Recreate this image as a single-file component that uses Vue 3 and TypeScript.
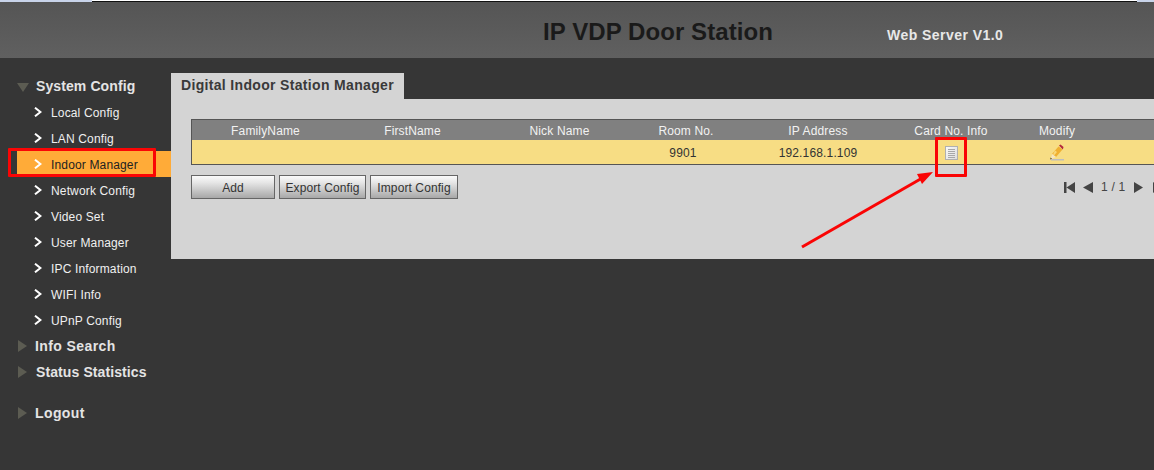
<script setup lang="ts">
const menu = [
  'Local Config',
  'LAN Config',
  'Indoor Manager',
  'Network Config',
  'Video Set',
  'User Manager',
  'IPC Information',
  'WIFI Info',
  'UPnP Config'
]

const columns = [
  { label: 'FamilyName', width: 147 },
  { label: 'FirstName', width: 147 },
  { label: 'Nick Name', width: 147 },
  { label: 'Room No.', width: 106 },
  { label: 'IP Address', width: 158 },
  { label: 'Card No. Info', width: 108 },
  { label: 'Modify', width: 104 }
]
</script>

<template>
  <div class="page">
    <div class="top-strip">
      <div class="strip-left"></div>
      <div class="strip-mid"></div>
      <div class="strip-right"></div>
    </div>

    <header class="header">
      <h1 class="title">IP VDP Door Station</h1>
      <span class="version">Web Server V1.0</span>
    </header>

    <div class="main">
      <aside class="sidebar">
        <div class="group inset">
          <span class="tri down"></span>
          <span>System Config</span>
        </div>
        <ul class="menu">
          <li v-for="item in menu" :key="item" :class="{ active: item === 'Indoor Manager' }">
            <svg class="chev" width="8" height="10" viewBox="0 0 8 10">
              <path d="M1 0.7 L6.4 5 L1 9.3" fill="none" stroke="currentColor" stroke-width="2" />
            </svg>
            <span class="label">{{ item }}</span>
          </li>
        </ul>
        <div class="group wide">
          <span class="tri right"></span>
          <span>Info Search</span>
        </div>
        <div class="group inset">
          <span class="tri right"></span>
          <span>Status Statistics</span>
        </div>
        <div class="group wide logout">
          <span class="tri right"></span>
          <span>Logout</span>
        </div>
      </aside>

      <section class="content">
        <div class="tab">Digital Indoor Station Manager</div>
        <div class="panel">
          <div class="table">
            <div class="row head">
              <div v-for="c in columns" :key="c.label" class="cell" :style="{ width: c.width + 'px' }">{{ c.label }}</div>
            </div>
            <div class="row body">
              <div class="cell spacer"></div>
              <div class="cell room">9901</div>
              <div class="cell ip">192.168.1.109</div>
              <div class="cell card">
                <svg width="13" height="14" viewBox="0 0 13 14">
                  <defs>
                    <linearGradient id="sheet" x1="0" y1="0" x2="1" y2="1">
                      <stop offset="0" stop-color="#fafafa" />
                      <stop offset="1" stop-color="#dcdcdc" />
                    </linearGradient>
                  </defs>
                  <rect x="0.5" y="0.5" width="12" height="13" fill="url(#sheet)" stroke="#b0b0b0" />
                  <path d="M3 3.5H10M3 5.5H10M3 7.5H10M3 9.5H10M3 11.5H10" stroke="#a8a8a8" stroke-width="1" />
                </svg>
              </div>
              <div class="cell modify">
                <svg width="14" height="17" viewBox="0 0 14 17">
                  <path d="M8.5 2.5 L12.5 5.5 L6 13 L2 10 Z" fill="#f0b030" />
                  <path d="M5 6.5 L7 8 L4 11.5 L3 10.5 Z" fill="#f8d878" />
                  <path d="M9 1.5 L10.5 0.5 L13.5 3 L12.8 5.5 Z" fill="#b3283c" />
                  <path d="M2 10 L6 13 L1 15 Z" fill="#f4e6c4" />
                  <path d="M0.5 13.5 L2 15 L0.5 15.5 Z" fill="#222" />
                  <rect x="1" y="15" width="13" height="1.5" fill="#bdbdbd" />
                </svg>
              </div>
            </div>
          </div>

          <div class="toolbar">
            <button class="btn add">Add</button>
            <button class="btn export">Export Config</button>
            <button class="btn import">Import Config</button>
            <div class="pager">
              <svg width="11" height="11" viewBox="0 0 11 11"><path d="M0 0H2.5V11H0Z M11 0V11L2.5 5.5Z" fill="#444" /></svg>
              <svg class="prev" width="10" height="11" viewBox="0 0 10 11"><path d="M10 0V11L0 5.5Z" fill="#444" /></svg>
              <span class="num">1 / 1</span>
              <svg class="next" width="9" height="11" viewBox="0 0 9 11"><path d="M0 0V11L9 5.5Z" fill="#444" /></svg>
              <svg class="last" width="11" height="11" viewBox="0 0 11 11"><path d="M11 0H8.5V11H11Z M0 0V11L8.5 5.5Z" fill="#444" /></svg>
            </div>
          </div>
        </div>
      </section>
    </div>

    <!-- annotations drawn on the screenshot -->
    <div class="mark mark-menu"></div>
    <div class="mark mark-card"></div>
    <svg class="arrow" width="150" height="95" viewBox="0 0 150 95">
      <path d="M12 87 L134 17" stroke="#fa0505" stroke-width="3" fill="none" />
      <path d="M143 12 L127 14 L132 24 Z" fill="#fa0505" />
    </svg>
  </div>
</template>

<style>
html,
body {
  margin: 0;
  background: #363636;
}
</style>

<style scoped>
.page {
  position: relative;
  width: 1154px;
  height: 470px;
  overflow: hidden;
  background: #363636;
  font-family: "Liberation Sans", Arial, sans-serif;
}

.top-strip {
  display: flex;
  height: 2px;
}
.strip-left,
.strip-right {
  background: #c9d4ea;
}
.strip-left {
  width: 92px;
}
.strip-right {
  width: 17px;
}
.strip-mid {
  flex: 1;
  background: #fff;
  border-bottom: 1px solid #111;
  box-sizing: border-box;
}

.header {
  display: flex;
  align-items: flex-start;
  height: 56px;
  background: linear-gradient(#555, #606060);
}
.title {
  margin: 16px 0 0 543px;
  font-size: 24px;
  line-height: 28px;
  font-weight: bold;
  letter-spacing: 0.08px;
  color: #1a1a1a;
}
.version {
  margin: 25px 0 0 114px;
  font-size: 14px;
  line-height: 16px;
  font-weight: bold;
  letter-spacing: 0.45px;
  color: #e8e8e8;
}

.main {
  display: flex;
}
.sidebar {
  width: 171px;
  flex: none;
  padding-top: 15px;
}
.group {
  display: flex;
  align-items: center;
  height: 26px;
  padding-left: 18px;
  font-size: 14px;
  font-weight: bold;
  color: #e4e4e4;
}
.group.inset {
  letter-spacing: 0.1px;
}
.group.wide {
  letter-spacing: 0.4px;
}
.group.logout {
  margin-top: 15px;
}
.tri {
  display: inline-block;
  width: 0;
  height: 0;
  flex: none;
}
.tri.down {
  margin-left: -1px;
  margin-right: 7px;
  border-left: 6px solid transparent;
  border-right: 6px solid transparent;
  border-top: 9px solid #5c5c52;
  margin-top: 3px;
}
.tri.right {
  margin-right: 8px;
  border-top: 6px solid transparent;
  border-bottom: 6px solid transparent;
  border-left: 9px solid #5c5c52;
}
.group.inset .tri.right {
  margin-right: 9px;
}

.menu {
  list-style: none;
  margin: 0;
  padding: 0;
}
.menu li {
  display: flex;
  align-items: center;
  height: 26px;
  padding-left: 34px;
  box-sizing: border-box;
  font-size: 12px;
  letter-spacing: 0.15px;
  color: #f0f0f0;
}
.menu li .chev {
  margin-right: 9px;
  color: #fff;
}
.menu li .label {
  padding-top: 1px;
}
.menu li.active {
  background: #ffab38;
  color: #222;
  margin-left: 17px;
  padding-left: 17px;
}

.content {
  flex: 1;
  padding-top: 15px;
  min-width: 0;
}
.tab {
  width: 233px;
  height: 26px;
  box-sizing: border-box;
  padding: 4px 0 0 10px;
  background: #d4d4d4;
  font-size: 14px;
  font-weight: bold;
  letter-spacing: 0.33px;
  color: #3a3a3a;
}
.panel {
  height: 160px;
  padding: 20px 0 0 20px;
  box-sizing: border-box;
  background: #d4d4d4;
}

.table {
  width: 1000px;
  box-sizing: border-box;
  border: 1px solid #555;
  border-right: none;
}
.row {
  display: flex;
  font-size: 12px;
  letter-spacing: 0.15px;
}
.row.head {
  height: 20px;
  background: #808080;
  color: #f2f2f2;
}
.row.body {
  height: 24px;
  background: #f7dd84;
  color: #333;
}
.cell {
  flex: none;
  display: flex;
  align-items: center;
  justify-content: center;
  padding-top: 1px;
}
.spacer {
  width: 441px;
}
.room {
  width: 100px;
}
.ip {
  width: 170px;
}
.card {
  width: 96px;
}
.modify {
  width: 116px;
}

.toolbar {
  display: flex;
  align-items: center;
  gap: 4px;
  margin-top: 10px;
  width: 1000px;
}
.btn {
  flex: none;
  height: 24px;
  padding: 1px 0 0;
  box-sizing: border-box;
  border: 1px solid #666;
  background: linear-gradient(#fafafa, #e6e6e6 30%, #a8a8a8);
  font-family: inherit;
  font-size: 12px;
  letter-spacing: 0.1px;
  color: #333;
}
.btn.add {
  width: 84px;
}
.btn.export {
  width: 87px;
}
.btn.import {
  width: 88px;
}

.pager {
  flex: none;
  display: flex;
  align-items: center;
  margin-left: 602px;
  font-size: 12px;
  letter-spacing: 0.2px;
  color: #444;
}
.pager .prev {
  margin-left: 8px;
}
.pager .num {
  margin: 0 10px 0 8px;
  width: 23px;
  white-space: nowrap;
}
.pager .last {
  margin-left: 10px;
}

.mark {
  position: absolute;
  box-sizing: border-box;
  border: 3px solid #fa0505;
  border-radius: 1px;
}
.mark-menu {
  left: 8px;
  top: 148px;
  width: 148px;
  height: 29px;
}
.mark-card {
  left: 935px;
  top: 137px;
  width: 32px;
  height: 40px;
}
.arrow {
  position: absolute;
  left: 790px;
  top: 160px;
}
</style>
